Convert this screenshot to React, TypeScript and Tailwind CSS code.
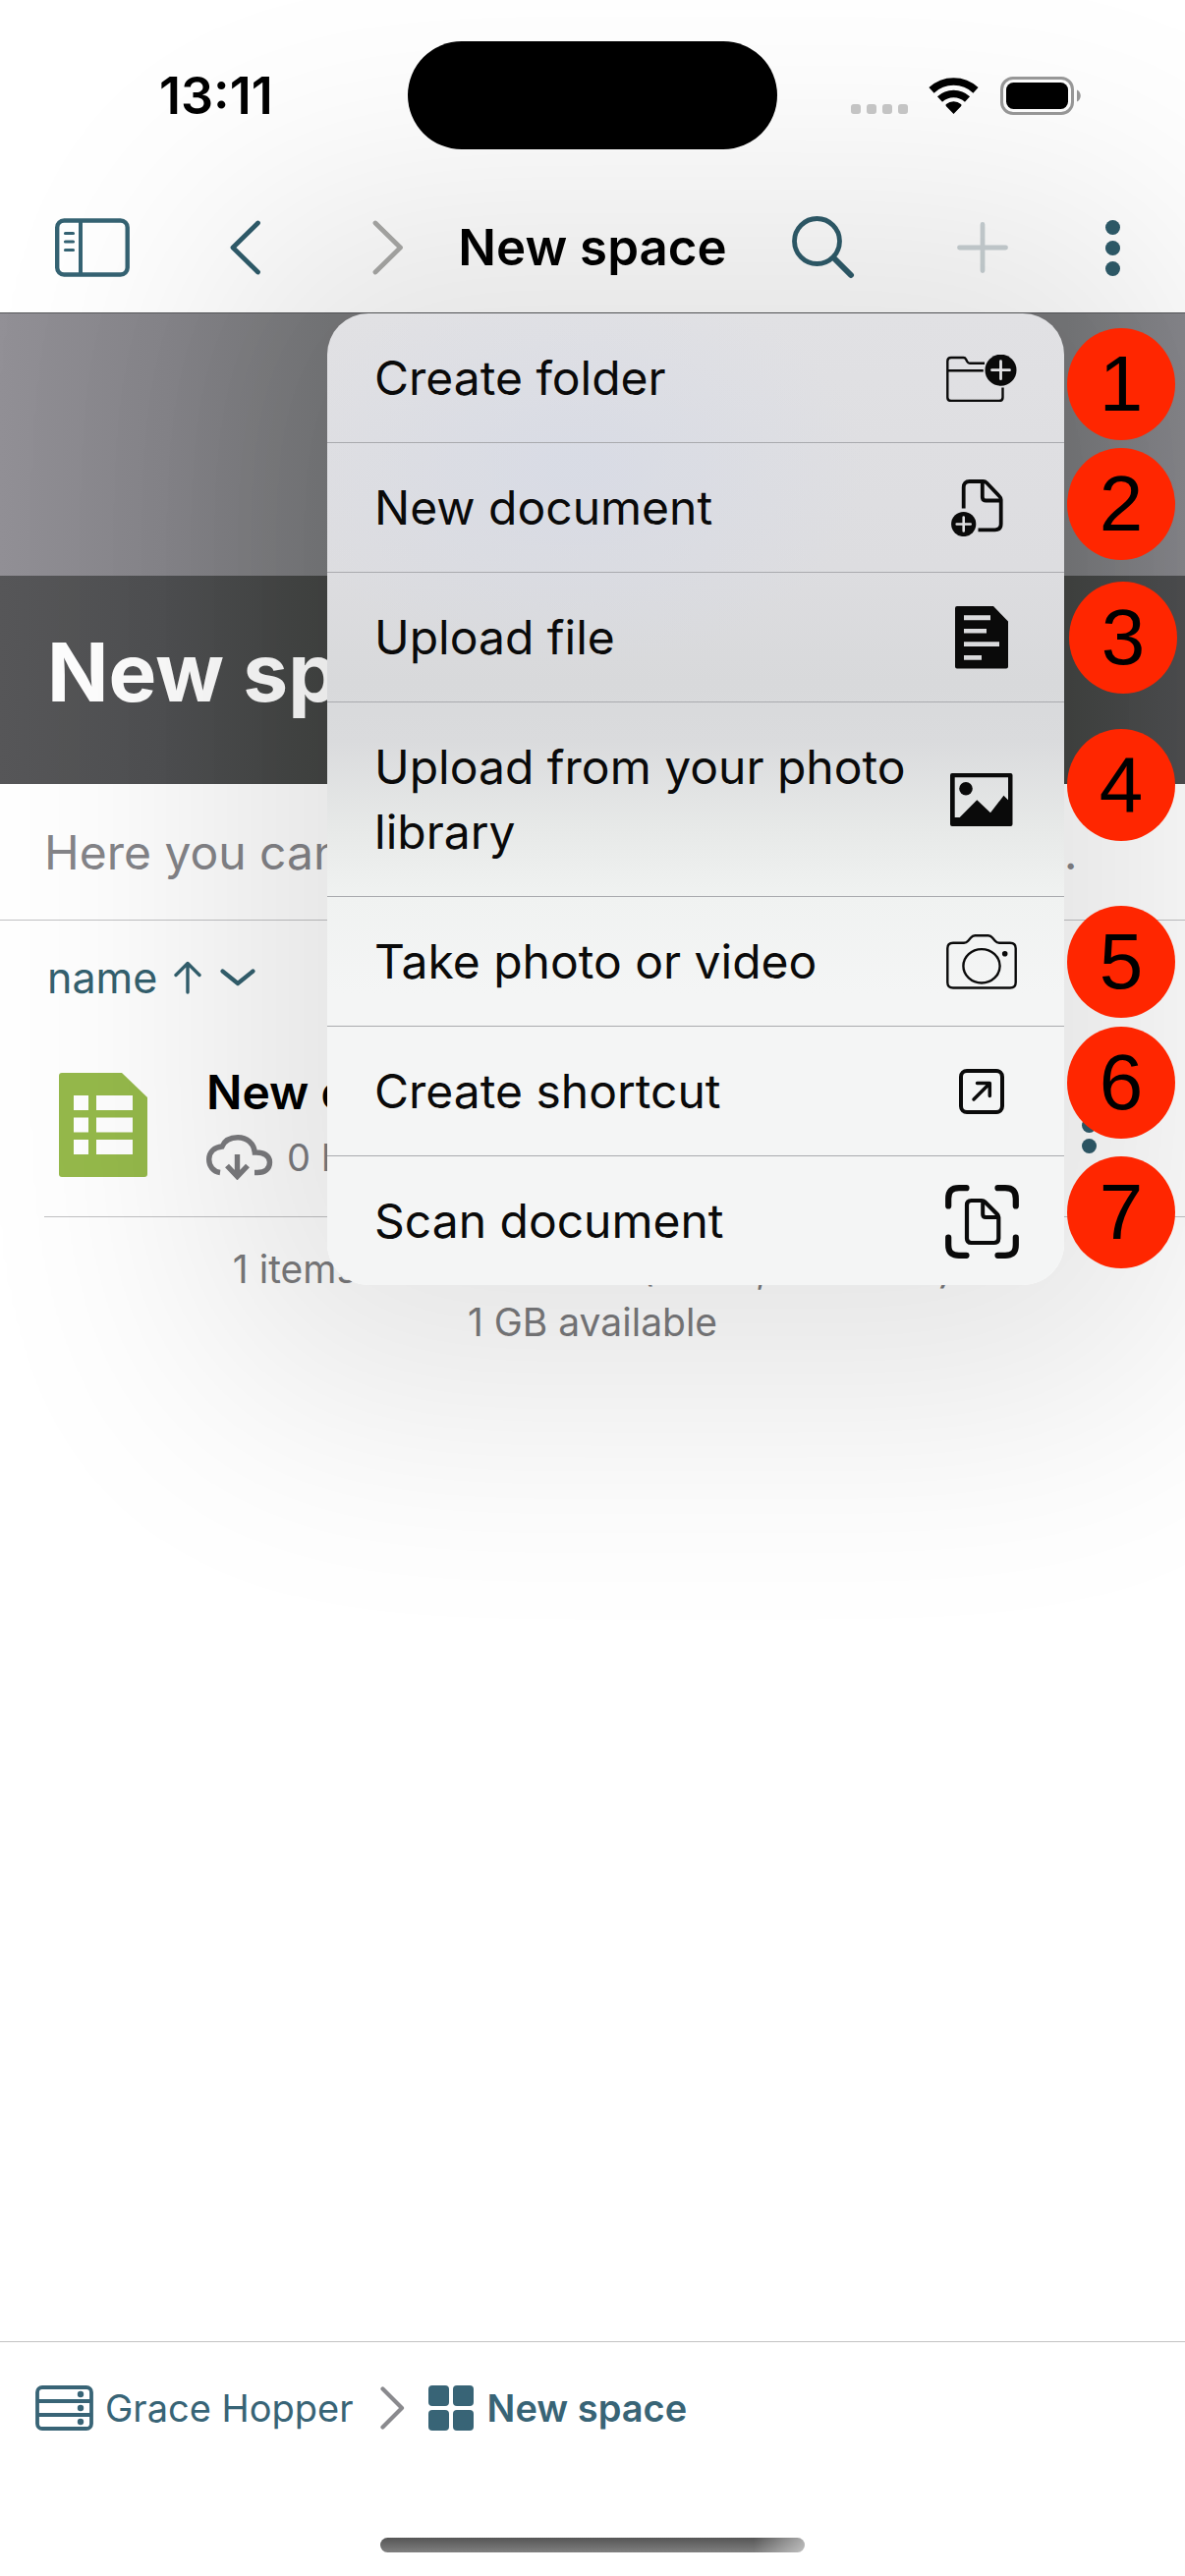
import type { ReactNode } from "react";

function StatusBar() {
  return (
    <div className="grid h-[186px] grid-cols-[1fr_auto_1fr] items-start pt-[42px]">
      <div className="flex h-[112px] items-center pl-[162px] text-[52px] font-semibold leading-none">
        13:11
      </div>
      <div className="h-[110px] w-[376px] rounded-full bg-black" />
      <div className="flex h-[110px] items-center justify-end pr-[106px]">
        <div className="mt-[28px] flex gap-[6px]">
          <span className="size-[10px] rounded-[3px] bg-[#c9c9c9]" />
          <span className="size-[10px] rounded-[3px] bg-[#c9c9c9]" />
          <span className="size-[10px] rounded-[3px] bg-[#c9c9c9]" />
          <span className="size-[10px] rounded-[3px] bg-[#c9c9c9]" />
        </div>
        <svg className="ml-[21px] h-[37px] w-[51px]" viewBox="0 0 51 37" fill="none" aria-label="Wi-Fi">
          <path d="M3 12.900a33 33 0 0 1 45 0" stroke="#000" strokeWidth="7.600" />
          <path d="M11.500 22a20.500 20.500 0 0 1 28 0" stroke="#000" strokeWidth="7.400" />
          <path d="M25.500 37 18 29.200a1.500 1.500 0 0 1 0-2.200 11.500 11.500 0 0 1 15 0 1.500 1.500 0 0 1 0 2.200z" fill="#000" />
        </svg>
        <svg className="ml-[22px] h-[39px] w-[82px]" viewBox="0 0 82 39" aria-label="Battery">
          <rect x="1.500" y="1.500" width="72" height="36" rx="11.500" fill="#fff" stroke="#999" strokeWidth="3" />
          <rect x="6" y="6" width="63" height="27" rx="7.500" fill="#000" />
          <path d="M78 13.500c5 2 5 10 0 12z" fill="#999" />
        </svg>
      </div>
    </div>
  );
}

function VerticalDots({ className }: { className: string }) {
  return (
    <svg className={className} viewBox="0 0 15 57" fill="currentColor">
      <circle cx="7.500" cy="7.500" r="7.500" />
      <circle cx="7.500" cy="28.500" r="7.500" />
      <circle cx="7.500" cy="49.500" r="7.500" />
    </svg>
  );
}

function NavBar() {
  return (
    <nav className="grid h-[133px] grid-cols-[1fr_auto_1fr] items-center border-b border-[#56575a] text-[#2f5c6b]">
      <div className="flex items-center pl-14">
        <button aria-label="Toggle sidebar">
          <svg className="h-[60px] w-[76px]" viewBox="0 0 76 60" fill="none" stroke="#356373">
            <rect x="2.200" y="2.500" width="71.500" height="55" rx="7" strokeWidth="4.400" />
            <path d="M26 3v54" strokeWidth="4" />
            <path d="M10.500 15.500h8M10.500 24h8M10.500 32.500h8" strokeWidth="3.200" strokeLinecap="round" />
          </svg>
        </button>
        <button aria-label="Back" className="ml-[102px]">
          <svg className="h-[56px] w-[32px]" viewBox="0 0 32 56" fill="none" stroke="currentColor" strokeWidth="4.800" strokeLinecap="round" strokeLinejoin="round">
            <path d="M28.500 3 3 28l25.500 25" />
          </svg>
        </button>
        <button aria-label="Forward" className="ml-[113px] text-[#aaaaa8]">
          <svg className="h-[56px] w-[32px]" viewBox="0 0 32 56" fill="none" stroke="currentColor" strokeWidth="4.800" strokeLinecap="round" strokeLinejoin="round">
            <path d="M3 3l25.500 25L3 53" />
          </svg>
        </button>
      </div>
      <h1 className="text-[51px] font-semibold leading-[66px] text-black">New space</h1>
      <div className="flex items-center justify-end pr-[66px]">
        <button aria-label="Search">
          <svg className="size-[64px]" viewBox="0 0 64 64" fill="none" stroke="currentColor" strokeLinecap="round">
            <circle cx="25.500" cy="25.500" r="23" strokeWidth="4.800" />
            <path d="M42.500 42.500 60 60" strokeWidth="6" />
          </svg>
        </button>
        <button aria-label="Add" className="ml-[104px] text-[#cad2d5]">
          <svg className="size-[52px]" viewBox="0 0 52 52" fill="none" stroke="currentColor" strokeWidth="4.800" strokeLinecap="round">
            <path d="M26 2.500v47M2.500 26h47" />
          </svg>
        </button>
        <button aria-label="More" className="ml-[99px]">
          <VerticalDots className="h-[57px] w-[15px]" />
        </button>
      </div>
    </nav>
  );
}

const menuItems: { label: string; icon: ReactNode }[] = [
  {
    label: "Create folder",
    icon: (
      <svg className="h-[48px] w-[72px]" viewBox="0 0 72 48" fill="none" stroke="#0a0a0a" strokeWidth="2.400">
        <path d="M39 8.800H24c-1.500 0-2-.5-2.700-1.800l-1.200-2.300C19.500 3.500 18.800 3 17.500 3H5C2.500 3 1.300 4.300 1.300 6.500v37C1.300 45.700 2.500 47 5 47h49c2.500 0 3.500-1.300 3.500-3.500V33.500M1.300 16.200h36.500" />
        <circle cx="55.500" cy="15.700" r="16" fill="#0a0a0a" stroke="none" />
        <path d="M55.500 6.700v18M46.500 15.700h18" stroke="#e2e2e4" strokeWidth="2.800" strokeLinecap="round" />
      </svg>
    ),
  },
  {
    label: "New document",
    icon: (
      <svg className="mr-[10px] h-[58px] w-[53px]" viewBox="0 0 53 58" fill="none" stroke="#0a0a0a" strokeWidth="3.800">
        <path d="M12.700 29.500V8c0-4 2-6 6-6h14c1.500 0 2.500.5 3.500 1.500L49 17c1.200 1.200 1.700 2 1.700 3.500v24.800c0 4-2 6-6 6H27.500" />
        <path d="M31.800 2.500V18c0 2.500 1 3.500 3.500 3.500H50" />
        <circle cx="12.700" cy="45.500" r="12.600" fill="#0a0a0a" stroke="none" />
        <path d="M12.700 38.500v14M5.700 45.500h14" stroke="#dfdfe1" strokeWidth="2.600" strokeLinecap="round" />
      </svg>
    ),
  },
  {
    label: "Upload file",
    icon: (
      <svg className="h-[64px] w-[54px]" viewBox="0 0 54 64" fill="#0a0a0a">
        <path
          fillRule="evenodd"
          d="M2 0h37l15 15.500V61.500a2 2 0 0 1-2 2H2a2 2 0 0 1-2-2V2a2 2 0 0 1 2-2zM9 9.300v5h27v-5zM9 23v4.600h23V23zM9 36.300V41h36v-4.700zM9 50v4.700h18V50z"
        />
      </svg>
    ),
  },
  {
    label: "Upload from your photo library",
    icon: (
      <svg className="h-[54px] w-[64px]" viewBox="0 0 64 54" fill="#0a0a0a">
        <path
          fillRule="evenodd"
          d="M2 0h59.500a2 2 0 0 1 2 2v50a2 2 0 0 1-2 2H2a2 2 0 0 1-2-2V2a2 2 0 0 1 2-2zM4.700 4.200V45h5L27.300 27.300 41 40.300l13.500-17.500 4.500 4.500V4.200z"
        />
        <circle cx="16" cy="15.700" r="6.800" />
      </svg>
    ),
  },
  {
    label: "Take photo or video",
    icon: (
      <svg className="h-[56px] w-[72px]" viewBox="0 0 72 56" fill="none" stroke="#0a0a0a" strokeWidth="2.400">
        <path d="M7 8.800h11c2 0 3-.6 4.200-2L25 3.500c1.300-1.600 2.300-2.200 4.200-2.200h13.600c1.900 0 2.900.6 4.200 2.200l2.800 3.300c1.200 1.400 2.200 2 4.200 2h11c3.800 0 5.700 2 5.700 5.500V49c0 3.500-1.900 5.500-5.700 5.500H7c-3.800 0-5.700-2-5.700-5.500V14.300c0-3.500 1.900-5.500 5.700-5.500z" />
        <ellipse cx="36" cy="32.300" rx="18.600" ry="17.200" />
        <circle cx="59.700" cy="19.700" r="2.800" fill="#0a0a0a" stroke="none" />
      </svg>
    ),
  },
  {
    label: "Create shortcut",
    icon: (
      <svg className="size-[46px]" viewBox="0 0 46 46" fill="none" stroke="#0a0a0a" strokeLinecap="round" strokeLinejoin="round">
        <rect x="2" y="2" width="42" height="42" rx="6" strokeWidth="4" />
        <path d="M15 31 31 15M18.500 14.500h12.800v13" strokeWidth="3.500" />
      </svg>
    ),
  },
  {
    label: "Scan document",
    icon: (
      <svg className="size-[75px]" viewBox="0 0 75 75" fill="none" stroke="#0a0a0a">
        <path
          d="M3.200 21.500V14C3.200 6.500 6.500 3.200 14 3.200h7.500M53.500 3.200H61c7.500 0 10.800 3.300 10.800 10.800v7.500M71.800 53.500V61c0 7.500-3.300 10.800-10.800 10.800h-7.500M21.500 71.800H14C6.500 71.800 3.200 68.500 3.200 61v-7.500"
          strokeWidth="6.200"
          strokeLinecap="round"
        />
        <path d="M26.500 16H37c1.500 0 2.500.4 3.500 1.400l12 12.100c1.200 1.200 1.800 2 1.800 3.500v21.500c0 3-1.500 4.500-4.500 4.500H26.500c-3 0-4.500-1.500-4.500-4.500v-34c0-3 1.500-4.500 4.500-4.500z" strokeWidth="4.200" />
        <path d="M38.200 17v13c0 2 1 3 3 3h12" strokeWidth="4" />
      </svg>
    ),
  },
];

function AddMenu() {
  return (
    <div
      role="menu"
      className="absolute right-[123px] top-[319px] z-10 w-[750px] divide-y divide-[#a9aaae] overflow-hidden rounded-[42px] bg-[radial-gradient(ellipse_300px_200px_at_250px_160px,#d2d8e880,#d2d8e800),linear-gradient(180deg,#e1e1e4_0%,#dddde0_26%,#d8d9db_38%,#dadbdd_44%,#e7e9e8_53%,#f0f2f1_60%,#f4f5f5_70%,#f4f5f5_100%)] shadow-[0_0_270px_120px_rgba(10,10,0,0.105)]"
    >
      {menuItems.map((item) => (
        <button
          key={item.label}
          role="menuitem"
          className="flex w-full items-center pb-8 pl-12 pr-[46px] pt-[33px] text-left text-[48px] leading-[66px] text-[#0a0a0a]"
        >
          <span className="flex-1">{item.label}</span>
          <span className="-my-[9px] flex w-[76px] shrink-0 justify-center">{item.icon}</span>
        </button>
      ))}
    </div>
  );
}

const badges: { label: string; place: string }[] = [
  { label: "1", place: "right-[10px] top-[334px]" },
  { label: "2", place: "right-[10px] top-[456px]" },
  { label: "3", place: "right-[8px] top-[592px]" },
  { label: "4", place: "right-[10px] top-[742px]" },
  { label: "5", place: "right-[10px] top-[922px]" },
  { label: "6", place: "right-[10px] top-[1045px]" },
  { label: "7", place: "right-[10px] top-[1177px]" },
];

function Badge({ label, place }: { label: string; place: string }) {
  return (
    <span
      className={`${place} absolute z-20 flex h-[114px] w-[110px] items-center justify-center rounded-[50%] bg-[#ff2600] font-['Liberation_Sans',Arial,sans-serif] text-[80px] leading-none text-black`}
    >
      {label}
    </span>
  );
}

function SpaceHeader() {
  return (
    <section>
      <div className="h-[267px] bg-[linear-gradient(90deg,#929096_0%,#87868b_14%,#797a7c_28%,#797a7c_90%,#87878c_100%)]" />
      <div className="flex h-[212px] items-center bg-[linear-gradient(90deg,#575759_0%,#4f5052_14%,#434543_28%,#434543_90%,#4e4f51_100%)] pb-[14px] pl-12">
        <h2 className="text-[82px] font-bold leading-[100px] text-white">New space</h2>
      </div>
      <p className="whitespace-nowrap border-b border-[#c2c2c4] pb-[35px] pl-[45px] pt-[37px] text-[48px] leading-[66px] text-[#858589]">
        Here you can add a description for this Space.
      </p>
    </section>
  );
}

function FileList() {
  return (
    <section>
      <button className="flex h-[115px] items-center pl-12 text-[43px] leading-[54px] text-[#34616f]">
        name
        <svg className="ml-[17px] h-[34px] w-[28px]" viewBox="0 0 28 34" fill="none" stroke="currentColor" strokeWidth="3.400" strokeLinecap="round" strokeLinejoin="round">
          <path d="M14 32V2.500M2 14.500l12-12 12 12" />
        </svg>
        <svg className="ml-[19px] h-[18px] w-[36px]" viewBox="0 0 36 18" fill="none" stroke="currentColor" strokeWidth="4.200" strokeLinecap="round" strokeLinejoin="round">
          <path d="M2.500 2.500 18 15 33.500 2.500" />
        </svg>
      </button>
      <div className="ml-[45px] flex h-[187px] items-center border-b border-[#c2c2c4] pl-[15px]">
        <svg className="h-[106px] w-[90px]" viewBox="0 0 90 106">
          <path d="M3 0h61l26 25v78a3 3 0 0 1-3 3H3a3 3 0 0 1-3-3V3a3 3 0 0 1 3-3z" fill="#96ba4b" />
          <path d="M15 23h15v15H15zM38 23h37v15H38zM15 45.500h15v15H15zM38 45.500h37v15H38zM15 68h15v15H15zM38 68h37v15H38z" fill="#fff" />
        </svg>
        <div className="ml-[60px] flex-1">
          <div className="text-[48px] font-semibold leading-[66px] text-black">New document</div>
          <div className="flex items-center text-[38px] leading-[66px] text-[#7c7c7f]">
            <svg className="h-[46px] w-[68px]" viewBox="0 0 68 46" fill="none" stroke="currentColor" strokeWidth="5.400">
              <path d="M14 38.500C7 37.500 2.700 32 2.700 25c0-7.500 5.500-12.500 13.300-13C18.500 6 24.500 2.700 32 2.700c9.500 0 16.500 6.300 17.300 15.300C58.500 17.500 64.500 21.500 64.500 28c0 7-5 10.500-12.500 10.500h-3" />
              <path d="M31.500 20v20M21 31.500l10.500 11L42 31.500" />
            </svg>
            <span className="ml-[14px]">0 KB</span>
          </div>
        </div>
        <button aria-label="File actions" className="mr-[90px] text-[#2f5c6b]">
          <VerticalDots className="h-[57px] w-[15px]" />
        </button>
      </div>
      <p className="pt-[26px] text-center text-[39px] leading-[54px] text-[#7b7b7d]">
        1 items with 0 KB total (1 files, 0 folders)
        <br />1 GB available
      </p>
    </section>
  );
}

function Breadcrumb() {
  return (
    <footer className="relative z-20 mt-auto border-t border-[#c3c3c3] bg-white">
      <div className="flex h-[134px] items-center pl-9 text-[38px] leading-[54px] text-[#386476]">
        <a href="#account" className="flex items-center">
          <svg className="h-[46px] w-[59px]" viewBox="0 0 59 46" fill="none" stroke="currentColor" strokeWidth="3.800">
            <rect x="2" y="2" width="55" height="42" rx="5" />
            <path d="M3 16h53M3 30h53" />
            <circle cx="46" cy="9" r="3.200" fill="currentColor" stroke="none" />
            <circle cx="46" cy="23" r="3.200" fill="currentColor" stroke="none" />
            <circle cx="46" cy="37" r="3.200" fill="currentColor" stroke="none" />
          </svg>
          <span className="ml-3">Grace Hopper</span>
        </a>
        <svg className="ml-[27px] h-[44px] w-[25px] text-[#8a8a8e]" viewBox="0 0 25 44" fill="none" stroke="currentColor" strokeWidth="4.200" strokeLinecap="round" strokeLinejoin="round">
          <path d="M2.500 2.500 22 22 2.500 41.500" />
        </svg>
        <a href="#space" className="ml-6 flex items-center font-semibold">
          <svg className="size-[46px]" viewBox="0 0 46 46" fill="currentColor">
            <rect width="21" height="21" rx="4" />
            <rect x="25" width="21" height="21" rx="4" />
            <rect y="25" width="21" height="21" rx="4" />
            <rect x="25" y="25" width="21" height="21" rx="4" />
          </svg>
          <span className="ml-[14px]">New space</span>
        </a>
      </div>
      <div className="mx-auto mb-6 mt-[65px] h-[15px] w-[432px] rounded-full bg-[linear-gradient(90deg,#fff0_88%,#ffffff80_100%),linear-gradient(180deg,#555,#808080)]" />
    </footer>
  );
}

export default function App() {
  return (
    <div className="relative flex min-h-screen flex-col overflow-hidden bg-white font-[Inter,'Liberation_Sans',sans-serif]">
      <header>
        <StatusBar />
        <NavBar />
      </header>
      <main>
        <SpaceHeader />
        <FileList />
      </main>
      <AddMenu />
      {badges.map((badge) => (
        <Badge key={badge.label} label={badge.label} place={badge.place} />
      ))}
      <Breadcrumb />
    </div>
  );
}
